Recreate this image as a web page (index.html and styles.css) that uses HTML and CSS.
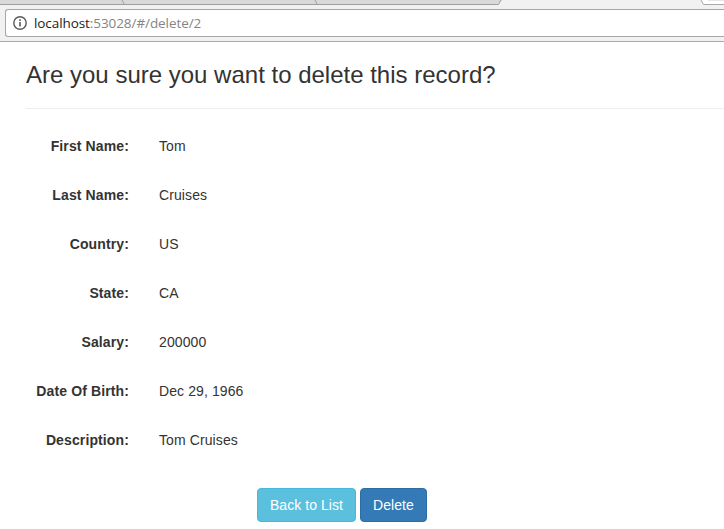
FILE: index.html
```html
<!DOCTYPE html>
<html lang="en">
<head>
<meta charset="utf-8">
<title>Delete record</title>
<link rel="stylesheet" href="styles.css">
</head>
<body>
<header class="browser">
  <svg class="tabs" width="724" height="5" viewBox="0 0 724 5">
    <path d="M0 0H502L498 4.5H0Z" fill="#d9d9d9"/>
    <path d="M0 4.5H498.500L501 0M122 0L124 4M315 0L317 4" fill="none" stroke="#a0a0a0"/>
    <path d="M701 0L703.500 4.500H724V0Z" fill="#fff"/>
    <path d="M701 0L703.500 4.500H724" fill="none" stroke="#a8a8a8"/>
    <path d="M708 .5H724" stroke="#e6e6e6"/>
  </svg>
  <div class="toolbar">
    <div class="address">
      <svg class="info" width="14" height="14" viewBox="0 0 14 14">
        <circle cx="7" cy="7" r="6.200" fill="none" stroke="#5a5a5a" stroke-width="1.400"/>
        <path d="M7 3.300V4.900M7 6V10.600" stroke="#5a5a5a" stroke-width="1.600"/>
      </svg>
      <span class="url"><span class="host">localhost</span>:53028/#/delete/2</span>
    </div>
  </div>
</header>
<main class="page">
  <h3 class="title">Are you sure you want to delete this record?</h3>
  <dl class="record">
    <dt>First Name:</dt><dd>Tom</dd>
    <dt>Last Name:</dt><dd>Cruises</dd>
    <dt>Country:</dt><dd>US</dd>
    <dt>State:</dt><dd>CA</dd>
    <dt>Salary:</dt><dd>200000</dd>
    <dt>Date Of Birth:</dt><dd>Dec 29, 1966</dd>
    <dt>Description:</dt><dd>Tom Cruises</dd>
  </dl>
  <div class="actions">
    <button class="btn btn-info">Back to List</button>
    <button class="btn btn-primary">Delete</button>
  </div>
</main>
</body>
</html>
```
FILE: styles.css
```css
* { box-sizing: border-box; }
body {
  margin: 0;
  overflow: hidden;
  background: #fff;
  color: #333;
  font: 14px/20px "Liberation Sans", Arial, sans-serif;
}
.browser { background: #f1f1f1; }
.tabs { display: block; }
.toolbar {
  height: 37px;
  padding: 4px 0 0 5px;
  border-bottom: 1px solid #aaa;
}
.address {
  display: flex;
  align-items: center;
  gap: 7px;
  height: 28px;
  padding-left: 7px;
  border: 1px solid #a6a6a6;
  border-right: 0;
  border-radius: 3px 0 0 3px;
  background: #fff;
}
.url {
  color: #858585;
  font: 13.5px/20px "Open Sans", "Noto Sans", sans-serif;
  letter-spacing: -.08px;
}
.host { color: #222; }
.page { padding: 20px 0 0 26px; }
.title {
  margin: 0;
  padding-bottom: 20px;
  border-bottom: 1px solid #eee;
  font-size: 24px;
  line-height: 26px;
  font-weight: 400;
}
.record {
  display: grid;
  grid-template-columns: 103px 1fr;
  column-gap: 30px;
  row-gap: 29px;
  margin: 27px 0 0;
}
.record dt {
  font-weight: 700;
  letter-spacing: .12px;
  text-align: right;
  white-space: nowrap;
}
.record dd { margin: 0; letter-spacing: .1px; }
.actions {
  display: flex;
  gap: 4px;
  margin: 38px 0 0 231px;
}
.btn {
  height: 34px;
  padding: 6px 0;
  border: 1px solid;
  border-radius: 4px;
  color: #fff;
  font: inherit;
  letter-spacing: .06px;
  white-space: nowrap;
}
.btn-info { width: 99px; background: #5bc0de; border-color: #46b8da; }
.btn-primary { width: 67px; background: #337ab7; border-color: #2e6da4; }
```
